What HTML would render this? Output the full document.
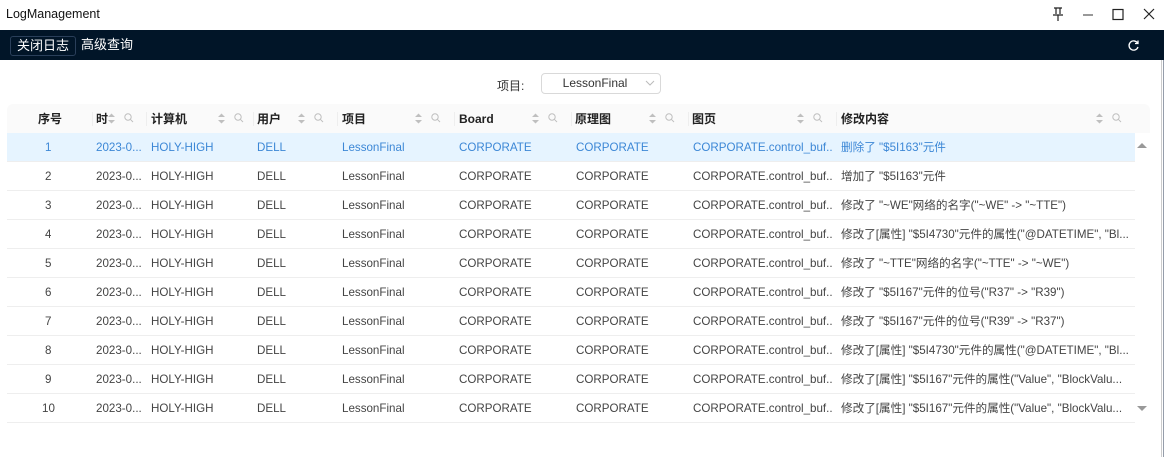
<!DOCTYPE html>
<html><head><meta charset="utf-8"><style>
*{margin:0;padding:0;box-sizing:border-box}
body{width:1164px;height:457px;overflow:hidden;background:#fff;font-family:"Liberation Sans","Noto Sans CJK SC",sans-serif;font-size:12px;color:#333;position:relative}
.title{position:absolute;left:6px;top:7px;font-size:12.5px;color:#111}
.bar{position:absolute;left:0;top:30px;width:1164px;height:30px;background:#011528}
.btn{position:absolute;top:36px;height:20px;color:#fff;font-size:13px;line-height:18px;padding:0 6px}
.b1{left:10px;border:1px solid #2a3f5a;border-radius:3px}
.b2{left:75px}
.sel{position:absolute;left:541px;top:73px;width:120px;height:21px;border:1px solid #d9d9d9;border-radius:4px;text-align:center;line-height:19px;color:#333;padding-right:12px}
.lbl{position:absolute;left:497px;top:77px}
.hdr{position:absolute;left:7px;top:104px;width:1143px;height:29px;background:#fafafa;border-radius:6px 6px 0 0}
.h{position:absolute;top:1px;height:29px;line-height:29px;font-weight:bold;color:#222;font-size:12px}
.sep{position:absolute;top:8px;width:1px;height:14px;background:#eee}
.row{position:absolute;left:7px;width:1128px;height:29px;border-bottom:1px solid #eee}
.c{position:absolute;top:1px;line-height:28px;white-space:nowrap;color:#444;font-size:11.6px;overflow:hidden}
.sel1 .c{color:#3c87d6}
.sel1{background:#e6f4ff}
</style></head><body>
<div class="title">LogManagement</div>
<svg style="position:absolute;left:1050px;top:6px" width="110" height="18" viewBox="0 0 110 18" fill="none" stroke="#222" stroke-width="1.2">
<path d="M4 2h8M6 2v6M10 2v6M3 9h10M8 9v6"/>
<path d="M33 9h10" stroke="#555"/>
<rect x="63" y="3.5" width="10" height="10"/>
<path d="M94 3l10 10M104 3l-10 10"/>
</svg>
<div class="bar"></div>
<div class="btn b1">关闭日志</div>
<div class="btn b2">高级查询</div>
<svg style="position:absolute;left:1127px;top:39px" width="13" height="13" viewBox="0 0 13 13" fill="none" stroke="#fff" stroke-width="1.3"><path d="M10.5 4A4.6 4.6 0 1 0 11 8"/><path d="M11 1.5v3h-3"/></svg>
<div style="position:absolute;left:1161px;top:60px;width:1px;height:397px;background:#ccc"></div>
<div style="position:absolute;left:1163px;top:60px;width:1px;height:397px;background:#2b3b55;opacity:.5"></div>
<div class="lbl">项目:</div>
<div class="sel">LessonFinal</div>
<svg style="position:absolute;left:645px;top:80px" width="10" height="7"><path d="M1 1l4 4 4-4" stroke="#bbb" fill="none"/></svg>
<div class="hdr">
<div class="h" style="left:31px">序号</div>
<div class="h" style="left:89px">时</div>
<div class="h" style="left:144px">计算机</div>
<div class="h" style="left:250px">用户</div>
<div class="h" style="left:335px">项目</div>
<div class="h" style="left:452px">Board</div>
<div class="h" style="left:568px">原理图</div>
<div class="h" style="left:685px">图页</div>
<div class="h" style="left:834px">修改内容</div>
<div class="sep" style="left:85px"></div><div class="sep" style="left:139px"></div><div class="sep" style="left:246px"></div><div class="sep" style="left:330px"></div><div class="sep" style="left:447px"></div><div class="sep" style="left:564px"></div><div class="sep" style="left:681px"></div><div class="sep" style="left:829px"></div>
</div>
<svg style="position:absolute;left:0;top:104px" width="1150" height="29">
<defs><g id="s"><path d="M0 5l3.5-3.5 3.5 3.5z M0 8l3.5 3.5 3.5-3.5z" fill="#bfbfbf"/><circle cx="20" cy="5" r="3.2" fill="none" stroke="#bfbfbf"/><path d="M22.3 7.3l2.7 2.7" stroke="#bfbfbf"/></g></defs>
<use href="#s" x="108" y="8"/><use href="#s" x="218" y="8"/><use href="#s" x="298" y="8"/><use href="#s" x="415" y="8"/><use href="#s" x="532" y="8"/><use href="#s" x="649" y="8"/><use href="#s" x="797" y="8"/><use href="#s" x="1096" y="8"/>
</svg>
<div id="rows"></div>
<svg style="position:absolute;left:1137px;top:142px" width="10" height="8"><path d="M0 6l5-5 5 5z" fill="#999"/></svg>
<svg style="position:absolute;left:1137px;top:405px" width="10" height="8"><path d="M0 1l5 5 5-5z" fill="#999"/></svg>
<script>
var m=['删除了 "$5I163"元件','增加了 "$5I163"元件','修改了 "~WE"网络的名字("~WE" -> "~TTE")','修改了[属性] "$5I4730"元件的属性("@DATETIME", "Bl...','修改了 "~TTE"网络的名字("~TTE" -> "~WE")','修改了 "$5I167"元件的位号("R37" -> "R39")','修改了 "$5I167"元件的位号("R39" -> "R37")','修改了[属性] "$5I4730"元件的属性("@DATETIME", "Bl...','修改了[属性] "$5I167"元件的属性("Value", "BlockValu...','修改了[属性] "$5I167"元件的属性("Value", "BlockValu...'];
var h='';
for(var i=0;i<10;i++){var t=133+i*29;
h+='<div class="row'+(i==0?' sel1':'')+'" style="top:'+t+'px">'+
'<div class="c" style="left:'+(i<9?38:35)+'px">'+(i+1)+'</div>'+
'<div class="c" style="left:89px">2023-0...</div>'+
'<div class="c" style="left:144px">HOLY-HIGH</div>'+
'<div class="c" style="left:250px">DELL</div>'+
'<div class="c" style="left:335px">LessonFinal</div>'+
'<div class="c" style="left:452px">CORPORATE</div>'+
'<div class="c" style="left:569px">CORPORATE</div>'+
'<div class="c" style="left:686px;width:140px">CORPORATE.control_buf...</div>'+
'<div class="c" style="left:834px;width:292px">'+m[i]+'</div></div>';}
document.getElementById('rows').innerHTML=h;
</script>
</body></html>
